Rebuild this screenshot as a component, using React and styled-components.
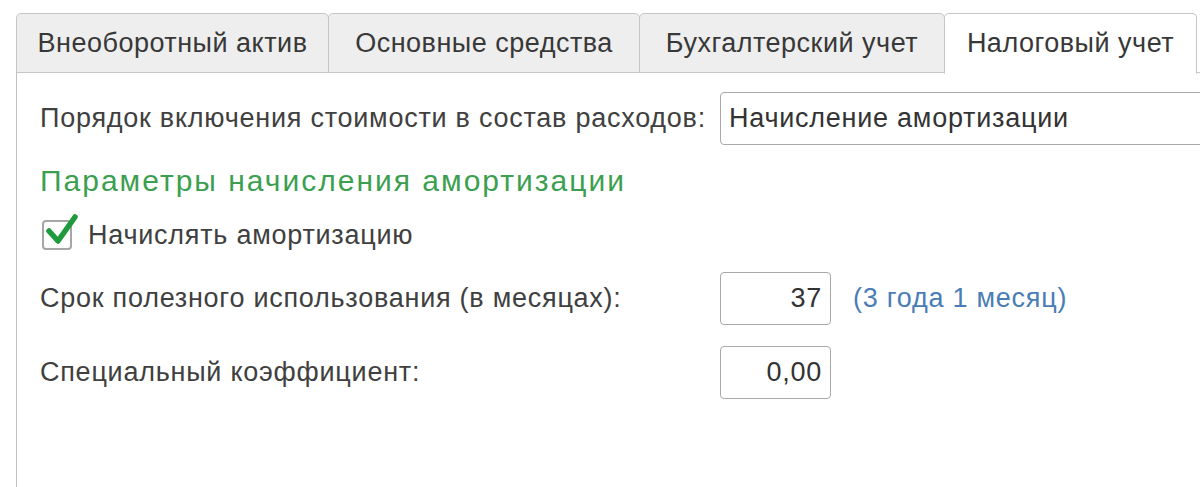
import styled, { createGlobalStyle } from "styled-components";

const GlobalStyle = createGlobalStyle`
  html, body {
    margin: 0;
    padding: 0;
    background: #ffffff;
    overflow: hidden;
  }
  body {
    font-family: "Liberation Sans", Arial, sans-serif;
    color: #404040;
  }
`;

const Page = styled.div`
  width: 1200px;
  height: 487px;
  padding: 13px 0 0 16px;
  box-sizing: border-box;
  display: flex;
  flex-direction: column;
  overflow: hidden;
`;

const TabBar = styled.div`
  display: flex;
  height: 60px;
  flex-shrink: 0;
  position: relative;
  z-index: 1;
`;

const Tab = styled.div`
  width: ${(p) => p.$width}px;
  box-sizing: border-box;
  display: flex;
  align-items: center;
  justify-content: center;
  font-size: 27px;
  letter-spacing: 0.5px;
  color: #383838;
  background: ${(p) => (p.$active ? "#ffffff" : "#eeeeee")};
  border: 1px solid #c6c6c6;
  border-bottom: ${(p) => (p.$active ? "1px solid #ffffff" : "1px solid #c6c6c6")};
  margin-left: -1px;
  border-radius: 5px 5px 0 0;
  height: ${(p) => (p.$active ? "61px" : "60px")};
  white-space: nowrap;

  &:first-child {
    margin-left: 0;
  }
`;

const Panel = styled.div`
  flex: 1;
  border-left: 1px solid #c0c0c0;
  border-top: 1px solid #c6c6c6;
  margin-top: -1px;
  padding: 19px 0 0 23px;
  display: flex;
  flex-direction: column;
  font-size: 27px;
  letter-spacing: 0.75px;
`;

const Row = styled.div`
  display: flex;
  align-items: center;
  height: 53px;
  margin-top: ${(p) => p.$top || 0}px;
`;

const Label = styled.div`
  width: 680px;
  flex-shrink: 0;
  white-space: nowrap;
`;

const Field = styled.div`
  box-sizing: border-box;
  height: 53px;
  width: ${(p) => (p.$wide ? "600px" : "111px")};
  flex-shrink: 0;
  border: 1px solid #a9a9a9;
  border-radius: 4px;
  background: #ffffff;
  display: flex;
  align-items: center;
  justify-content: ${(p) => (p.$wide ? "flex-start" : "flex-end")};
  padding: 0 8px;
  color: #333333;
  white-space: nowrap;
`;

const Note = styled.div`
  margin-left: 22px;
  color: #4a7db5;
  white-space: nowrap;
`;

const Heading = styled.div`
  margin-top: 18px;
  font-size: 30px;
  letter-spacing: 2px;
  line-height: 36px;
  color: #3c9f50;
  white-space: nowrap;
`;

const CheckRow = styled.label`
  display: flex;
  align-items: center;
  gap: 16px;
  height: 36px;
  margin-top: 18px;
  padding-left: 2px;
`;

const Box = styled.span`
  position: relative;
  width: 30px;
  height: 30px;
  box-sizing: border-box;
  border: 2px solid #a6a6a6;
  border-radius: 4px;
  flex-shrink: 0;

  svg {
    position: absolute;
    left: 2px;
    top: -9px;
  }
`;

function Check() {
  return (
    <Box>
      <svg width="34" height="34" viewBox="0 0 34 34">
        <path
          d="M3 18 L12 28 L29 4"
          fill="none"
          stroke="#1f9a3c"
          strokeWidth="5.5"
          strokeLinecap="round"
          strokeLinejoin="round"
        />
      </svg>
    </Box>
  );
}

const tabs = [
  { title: "Внеоборотный актив", width: 313 },
  { title: "Основные средства", width: 312 },
  { title: "Бухгалтерский учет", width: 306 },
  { title: "Налоговый учет", width: 253, active: true },
];

export default function App() {
  return (
    <>
      <GlobalStyle />
      <Page>
        <TabBar>
          {tabs.map((t) => (
            <Tab key={t.title} $width={t.width} $active={t.active}>
              {t.title}
            </Tab>
          ))}
        </TabBar>
        <Panel>
          <Row>
            <Label>Порядок включения стоимости в состав расходов:</Label>
            <Field $wide>Начисление амортизации</Field>
          </Row>
          <Heading>Параметры начисления амортизации</Heading>
          <CheckRow>
            <Check />
            Начислять амортизацию
          </CheckRow>
          <Row $top={19}>
            <Label>Срок полезного использования (в месяцах):</Label>
            <Field>37</Field>
            <Note>(3 года 1 месяц)</Note>
          </Row>
          <Row $top={21}>
            <Label>Специальный коэффициент:</Label>
            <Field>0,00</Field>
          </Row>
        </Panel>
      </Page>
    </>
  );
}
